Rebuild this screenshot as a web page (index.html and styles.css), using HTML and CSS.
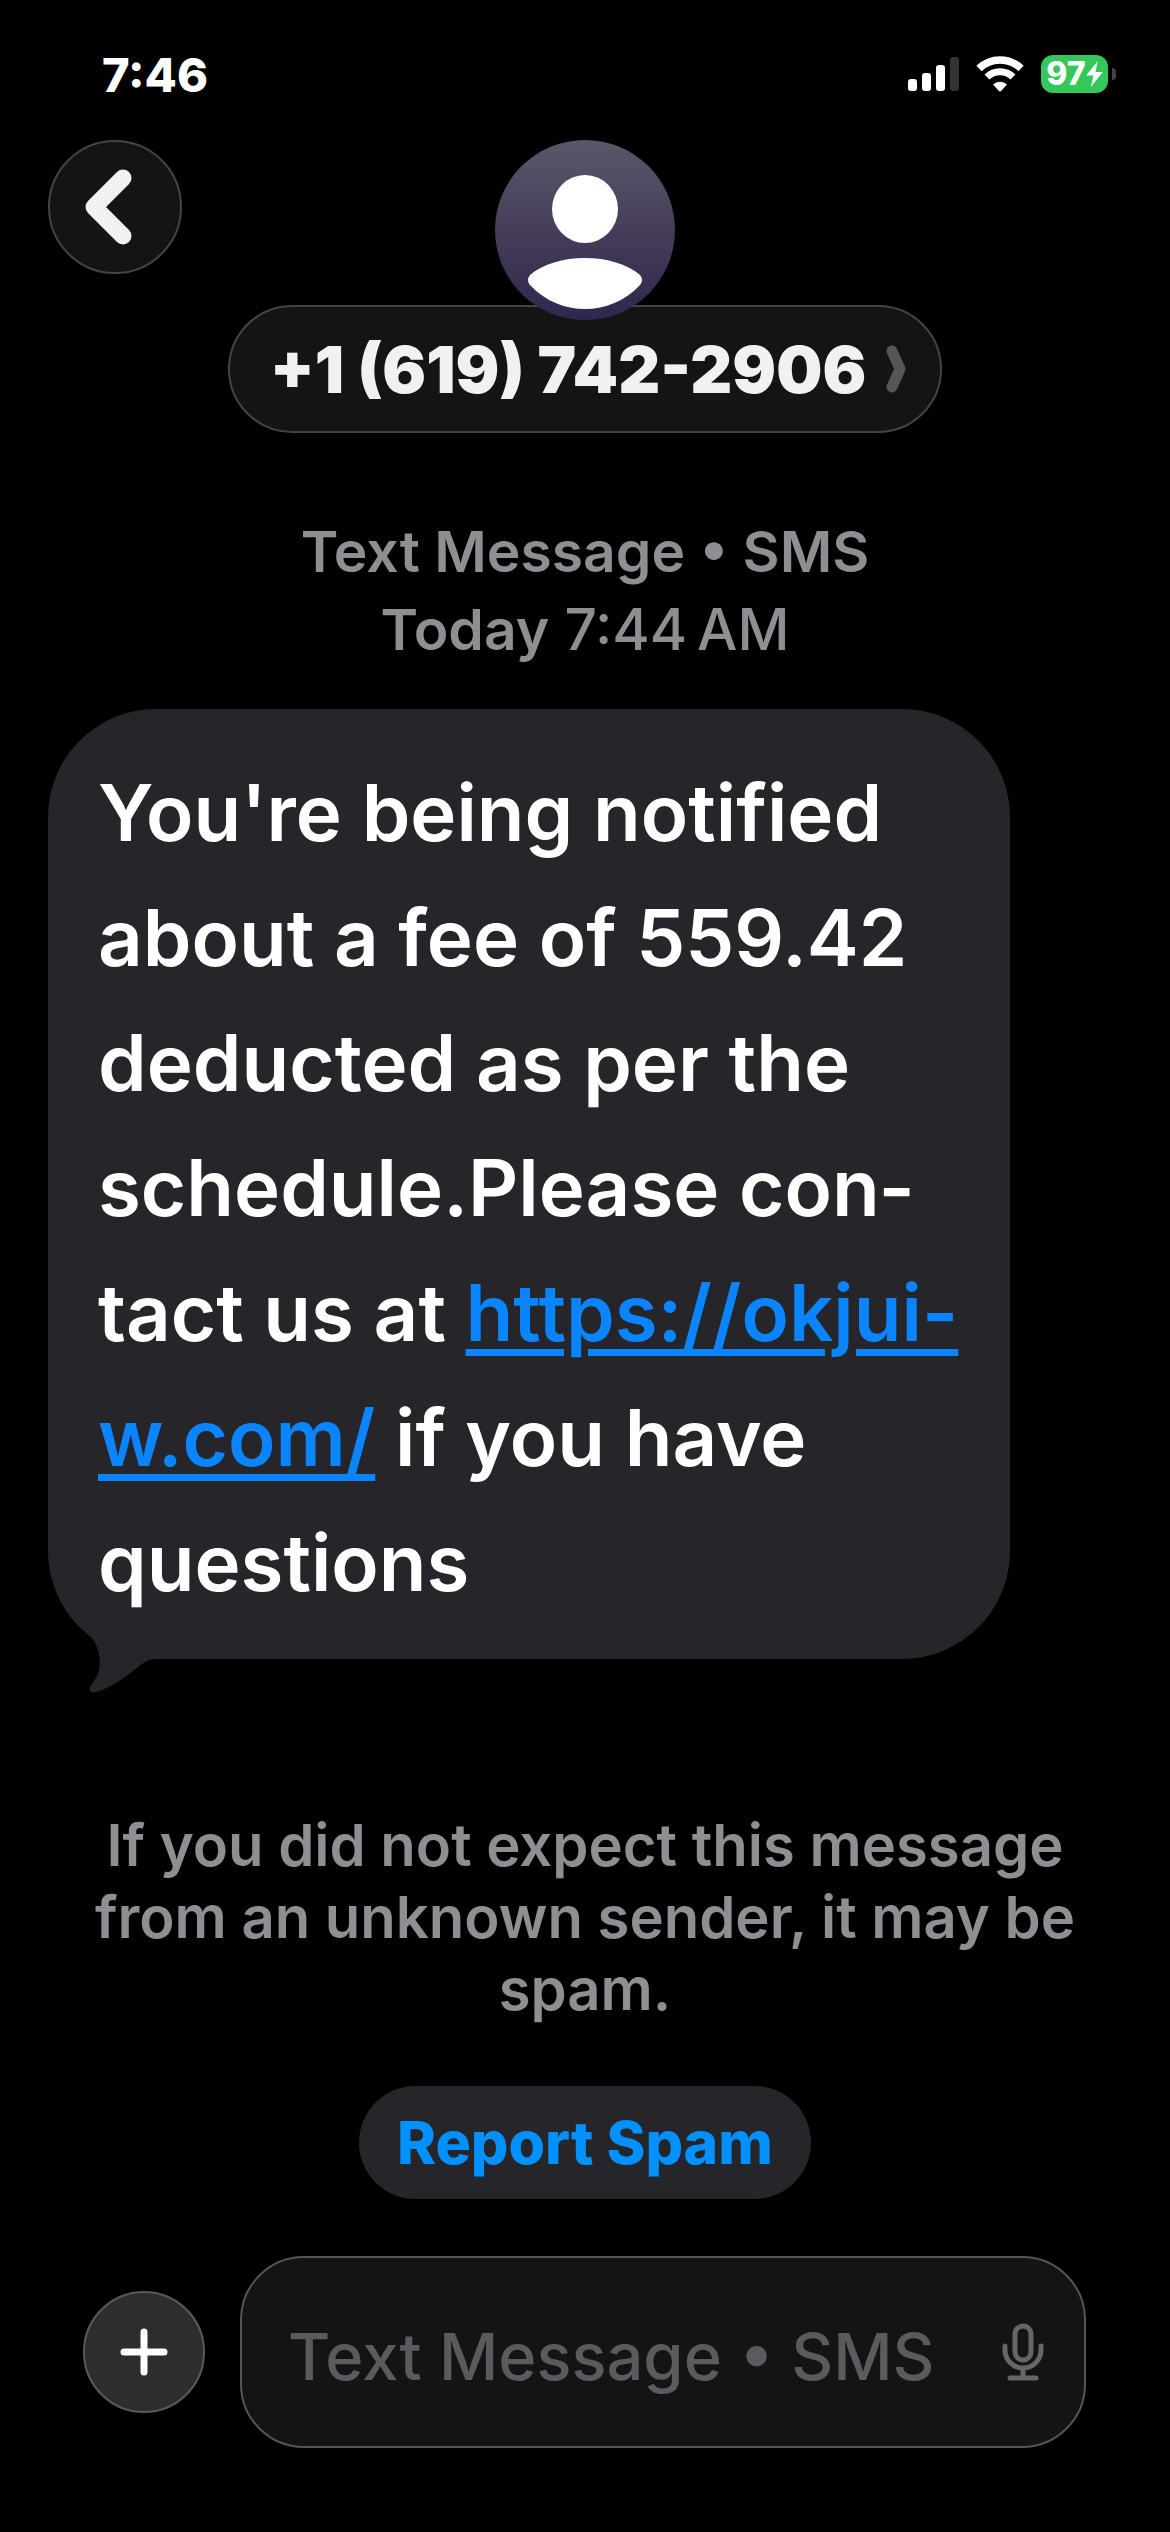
FILE: index.html
```html
<!DOCTYPE html>
<html lang="en">
<head>
	<meta charset="utf-8">
	<meta name="viewport" content="width=device-width, initial-scale=1">
	<title>+1 (619) 742-2906</title>
	<link rel="stylesheet" href="styles.css">
</head>
<body>
	<div class="statusbar">
		<span class="time">7:46</span>
		<div class="indicators">
			<svg class="signal" width="51" height="34" viewBox="0 0 51 34">
				<rect x="0" y="22" width="9" height="12" rx="3" fill="#fff"/>
				<rect x="14" y="16" width="9" height="18" rx="3" fill="#fff"/>
				<rect x="28" y="8" width="9" height="26" rx="3" fill="#fff"/>
				<rect x="42" y="0" width="9" height="34" rx="3" fill="#333"/>
			</svg>
			<svg class="wifi" width="48" height="36" viewBox="0 0 48 36">
				<path d="M3 12.500A30 30 0 0 1 45 12.500" fill="none" stroke="#fff" stroke-width="7.500"/>
				<path d="M11 21A18.500 18.500 0 0 1 37 21" fill="none" stroke="#fff" stroke-width="7"/>
				<path d="M17 28.500A10 10 0 0 1 31 28.500L25 35Q24 36 23 35Z" fill="#fff"/>
			</svg>
			<div class="battery">
				<span class="level">97</span>
				<svg width="17" height="26" viewBox="0 0 16 25"><path d="M11 0L0 14H7L4.500 25L16 10.500H9Z" fill="#fff"/></svg>
			</div>
			<span class="nub"></span>
		</div>
	</div>

	<header class="top">
		<button class="back" type="button" aria-label="Back">
			<svg width="48" height="76" viewBox="0 0 48 76"><path d="M39 9L10 38L39 67" fill="none" stroke="#f1f1f1" stroke-width="17" stroke-linecap="round" stroke-linejoin="round"/></svg>
		</button>
		<div class="contact">
			<svg class="avatar" width="180" height="180" viewBox="0 0 180 180">
				<defs>
					<linearGradient id="shade" x1="0" y1="0" x2="0" y2="1">
						<stop offset="0" stop-color="#5b5769"/>
						<stop offset="0.750" stop-color="#3b3153"/>
						<stop offset="1" stop-color="#30274f"/>
					</linearGradient>
				</defs>
				<circle cx="90" cy="90" r="90" fill="url(#shade)"/>
				<ellipse cx="90" cy="69" rx="33" ry="34" fill="#fff"/>
				<path d="M35 135C48 124 68 118 90 118S132 124 145 135Q149 140 145 145C130 161 110 169 90 169S50 161 35 145Q31 140 35 135Z" fill="#fff"/>
			</svg>
			<button class="number" type="button">
				<span>+1 (619) 742-2906</span>
				<svg width="20" height="48" viewBox="0 0 20 48"><path d="M6 6L14 24L6 42" fill="none" stroke="#555" stroke-width="11" stroke-linecap="round" stroke-linejoin="round"/></svg>
			</button>
		</div>
	</header>

	<main class="thread">
		<p class="stamp"><b>Text Message • SMS</b><br><b>Today</b> 7:44&#8239;AM</p>

		<div class="bubble">
			<p>You're being notified about a fee of 559.42 deducted as per the schedule.Please con&shy;tact us at <a href="https://okjui-w.com/">https://okjui-<wbr>w.com/</a> if you have questions</p>
			<svg class="tail" width="112" height="154" viewBox="0 0 112 154">
				<rect x="0" y="0" width="112" height="119" fill="#000"/>
				<path d="M0 0C2 40 8 64 40 94C51 104 55 122 49 136C46 142 40 147 42 151C44 155 55 150 66 144C88 132 94 119 108 119H112V0Z" fill="#262529"/>
			</svg>
		</div>

		<p class="warning">If you did not expect this message from an unknown sender, it may be spam.</p>
		<button class="report" type="button">Report Spam</button>
	</main>

	<form class="composer">
		<button class="add" type="button" aria-label="Add">
			<svg width="48" height="48" viewBox="0 0 48 48"><path d="M24 4V44M4 24H44" fill="none" stroke="#fff" stroke-width="7" stroke-linecap="round"/></svg>
		</button>
		<div class="field">
			<input type="text" placeholder="Text Message • SMS" aria-label="Text Message">
			<button class="mic" type="button" aria-label="Dictate">
				<svg width="42" height="58" viewBox="0 0 42 58" fill="none" stroke="#666" stroke-width="5" stroke-linecap="round">
					<rect x="13" y="3" width="16" height="34" rx="8"/>
					<path d="M3 23V27A18 18 0 0 0 39 27V23M21 46V54M8 55H34"/>
				</svg>
			</button>
		</div>
	</form>
</body>
</html>
```

FILE: styles.css
```css
* { box-sizing: border-box; }

body {
	margin: 0;
	min-height: 100vh;
	display: flex;
	flex-direction: column;
	background-color: #000;
	color: #fff;
	font-family: Inter, "Liberation Sans", sans-serif;
}

p { margin: 0; }

svg { display: block; flex: none; }

button {
	margin: 0;
	padding: 0;
	border: none;
	background: none;
	color: inherit;
	font-family: inherit;
}

/* status bar */
.statusbar {
	display: flex;
	justify-content: space-between;
	align-items: center;
	height: 148px;
	padding: 0 54px 0 102px;
}

.time { font-size: 47px; font-weight: 800; }

.indicators { display: flex; align-items: center; }

.wifi { margin: 0 17px; }

.battery {
	display: flex;
	align-items: center;
	justify-content: center;
	width: 67px;
	height: 38px;
	border-radius: 12px;
	background-color: #34c759;
}

.level { font-size: 32px; line-height: 38px; font-weight: 800; }

.nub {
	width: 4px;
	height: 12px;
	margin-left: 4px;
	border-radius: 0 4px 4px 0;
	background-color: #444;
}

/* contact header */
.top {
	display: grid;
	grid-template-columns: 134px 1fr 134px;
	padding: 0 48px;
	margin-top: -8px;
}

.back {
	display: flex;
	align-items: center;
	justify-content: center;
	height: 134px;
	padding-right: 14px;
	border: 2px solid #444;
	border-radius: 50%;
	background-color: #141414;
}

.contact {
	display: flex;
	flex-direction: column;
	align-items: center;
}

.avatar { position: relative; z-index: 1; }

.number {
	display: flex;
	align-items: center;
	gap: 20px;
	height: 128px;
	margin-top: -15px;
	padding: 0 34px 0 40px;
	border: 2px solid #444;
	border-radius: 64px;
	background-color: #141414;
	color: #f1f1f1;
	font-size: 65px;
	font-weight: 900;
	white-space: nowrap;
}

/* messages */
.thread {
	flex: 1;
	display: flex;
	flex-direction: column;
	align-items: center;
	padding: 80px 48px 0;
}

.stamp {
	color: #8e8e93;
	font-size: 57px;
	line-height: 78px;
	font-weight: 500;
	text-align: center;
}

.stamp b { font-weight: 600; }

.bubble {
	position: relative;
	align-self: flex-start;
	width: 962px;
	max-width: 100%;
	margin-top: 40px;
	padding: 41px 48px 34px 50px;
	border-radius: 108px;
	background-color: #262529;
	font-size: 78px;
	line-height: 125px;
	font-weight: 600;
}

.bubble a {
	color: #0a84ff;
	text-decoration-thickness: 7px;
	text-underline-offset: 8px;
}

.tail {
	position: absolute;
	left: 0;
	bottom: -35px;
	z-index: -1;
}

.warning {
	margin-top: 150px;
	color: #8e8e93;
	font-size: 58px;
	line-height: 72px;
	font-weight: 600;
	text-align: center;
}

.report {
	height: 113px;
	margin-top: 61px;
	padding: 0 38px;
	border-radius: 57px;
	background-color: #262529;
	color: #0091ff;
	font-size: 59px;
	font-weight: 800;
}

/* composer */
.composer {
	display: flex;
	align-items: center;
	gap: 35px;
	padding: 0 84px 84px 83px;
}

.add {
	display: flex;
	flex: none;
	align-items: center;
	justify-content: center;
	width: 122px;
	height: 122px;
	border: 2px solid #5a5a5a;
	border-radius: 50%;
	background-color: #2d2d2d;
}

.field {
	flex: 1;
	min-width: 0;
	display: flex;
	align-items: center;
	height: 192px;
	padding: 0 40px 0 46px;
	border: 2px solid #555;
	border-radius: 64px;
	background-color: #141414;
}

.field input {
	flex: 1;
	min-width: 0;
	height: 100%;
	padding: 8px 0 0;
	border: none;
	outline: none;
	background: none;
	color: #fff;
	font-family: inherit;
	font-size: 65px;
	font-weight: 500;
}

.field input::placeholder { color: #5b5b5f; opacity: 1; }
```
